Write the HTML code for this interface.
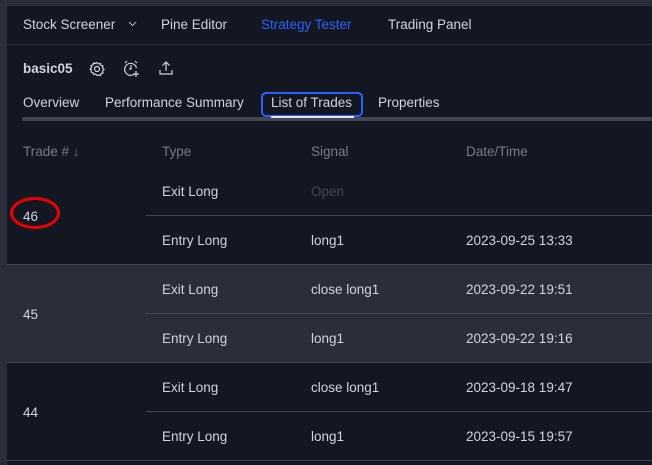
<!DOCTYPE html>
<html><head><style>
body{margin:0;width:652px;height:465px;background:#2a2e39;overflow:hidden;font-family:"Liberation Sans",sans-serif;font-size:13.5px;color:#d1d4dc;position:relative}
.p{position:absolute;left:7px;top:6px;right:0;bottom:0;background:#131722}
.a{position:absolute;white-space:nowrap}
.hl{position:absolute;height:1px;background:#434651}
</style></head><body>
<div class="p"></div>
<div class="a" style="left:23px;top:17px">Stock Screener</div>
<svg class="a" style="left:128px;top:21px" width="9" height="6"><path d="M1 1l3.5 3.5L8 1" stroke="#b2b5be" fill="none"/></svg>
<div class="a" style="left:161px;top:17px">Pine Editor</div>
<div class="a" style="left:261px;top:17px;color:#2962ff">Strategy Tester</div>
<div class="a" style="left:388px;top:17px">Trading Panel</div>
<div class="hl" style="left:7px;right:0;top:44px;background:#2a2e39"></div>
<div class="a" style="left:23px;top:61px;font-weight:bold">basic05</div>
<svg class="a" style="left:89px;top:61px" width="16" height="16" fill="none" stroke="#d1d4dc" stroke-width="1.2"><circle cx="8" cy="8" r="2.5"/><path d="M8 1.5l1.5 1.5 2-.5.5 2 2 .5-.5 2 1.5 1.5-1.5 1.5.5 2-2 .5-.5 2-2-.5L8 14.5 6.5 13l-2 .5-.5-2-2-.5.5-2L1 8l1.5-1.5-.5-2 2-.5.5-2 2 .5z"/></svg>
<svg class="a" style="left:122px;top:59px" width="20" height="20" fill="none" stroke="#d1d4dc" stroke-width="1.2"><path d="M13 14.5A6 6 0 1 1 14.5 9"/><path d="M9 6v4h-2"/><path d="M3 4l2-2M15 4l-2-2"/><path d="M14 12v6M11 15h6"/></svg>
<svg class="a" style="left:158px;top:60px" width="16" height="16" fill="none" stroke="#d1d4dc" stroke-width="1.2"><path d="M8 11V2M4.5 5.5L8 2l3.5 3.5M2 10v4h12v-4"/></svg>
<div class="a" style="left:23px;top:95px">Overview</div>
<div class="a" style="left:105px;top:95px">Performance Summary</div>
<div class="a" style="left:261px;top:92px;width:102px;height:25px;border:2px solid #2962ff;border-radius:5px;box-sizing:border-box"></div>
<div class="a" style="left:271px;top:95px">List of Trades</div>
<div class="a" style="left:378px;top:95px">Properties</div>
<div class="a" style="left:22px;top:117px;right:0;height:4px;background:#434651;border-radius:2px"></div>
<div class="a" style="left:271px;top:116px;width:83px;height:2px;background:#e0e3eb"></div>
<div class="a" style="left:23px;top:144px;color:#787b86">Trade # ↓</div>
<div class="a" style="left:162px;top:144px;color:#787b86">Type</div>
<div class="a" style="left:311px;top:144px;color:#787b86">Signal</div>
<div class="a" style="left:466px;top:144px;color:#787b86">Date/Time</div>

<div class="a" style="left:7px;top:265px;right:0;height:97px;background:#2a2e39"></div>
<div class="hl" style="left:146px;right:0;top:215px"></div>
<div class="hl" style="left:7px;right:0;top:264px"></div>
<div class="hl" style="left:146px;right:0;top:313px;background:#434651"></div>
<div class="hl" style="left:7px;right:0;top:362px"></div>
<div class="hl" style="left:146px;right:0;top:411px"></div>
<div class="hl" style="left:7px;right:0;top:460px"></div>

<div class="a" style="left:23px;top:209px">46</div>
<div class="a" style="left:10px;top:197px;width:50px;height:32px;border:3px solid #e00;border-radius:50%;box-sizing:border-box"></div>
<div class="a" style="left:162px;top:184px">Exit Long</div>
<div class="a" style="left:311px;top:184px;color:#434651">Open</div>
<div class="a" style="left:162px;top:233px">Entry Long</div>
<div class="a" style="left:311px;top:233px">long1</div>
<div class="a" style="left:466px;top:233px">2023-09-25 13:33</div>

<div class="a" style="left:23px;top:307px">45</div>
<div class="a" style="left:162px;top:282px">Exit Long</div>
<div class="a" style="left:311px;top:282px">close long1</div>
<div class="a" style="left:466px;top:282px">2023-09-22 19:51</div>
<div class="a" style="left:162px;top:331px">Entry Long</div>
<div class="a" style="left:311px;top:331px">long1</div>
<div class="a" style="left:466px;top:331px">2023-09-22 19:16</div>

<div class="a" style="left:23px;top:405px">44</div>
<div class="a" style="left:162px;top:380px">Exit Long</div>
<div class="a" style="left:311px;top:380px">close long1</div>
<div class="a" style="left:466px;top:380px">2023-09-18 19:47</div>
<div class="a" style="left:162px;top:429px">Entry Long</div>
<div class="a" style="left:311px;top:429px">long1</div>
<div class="a" style="left:466px;top:429px">2023-09-15 19:57</div>
</body></html>
